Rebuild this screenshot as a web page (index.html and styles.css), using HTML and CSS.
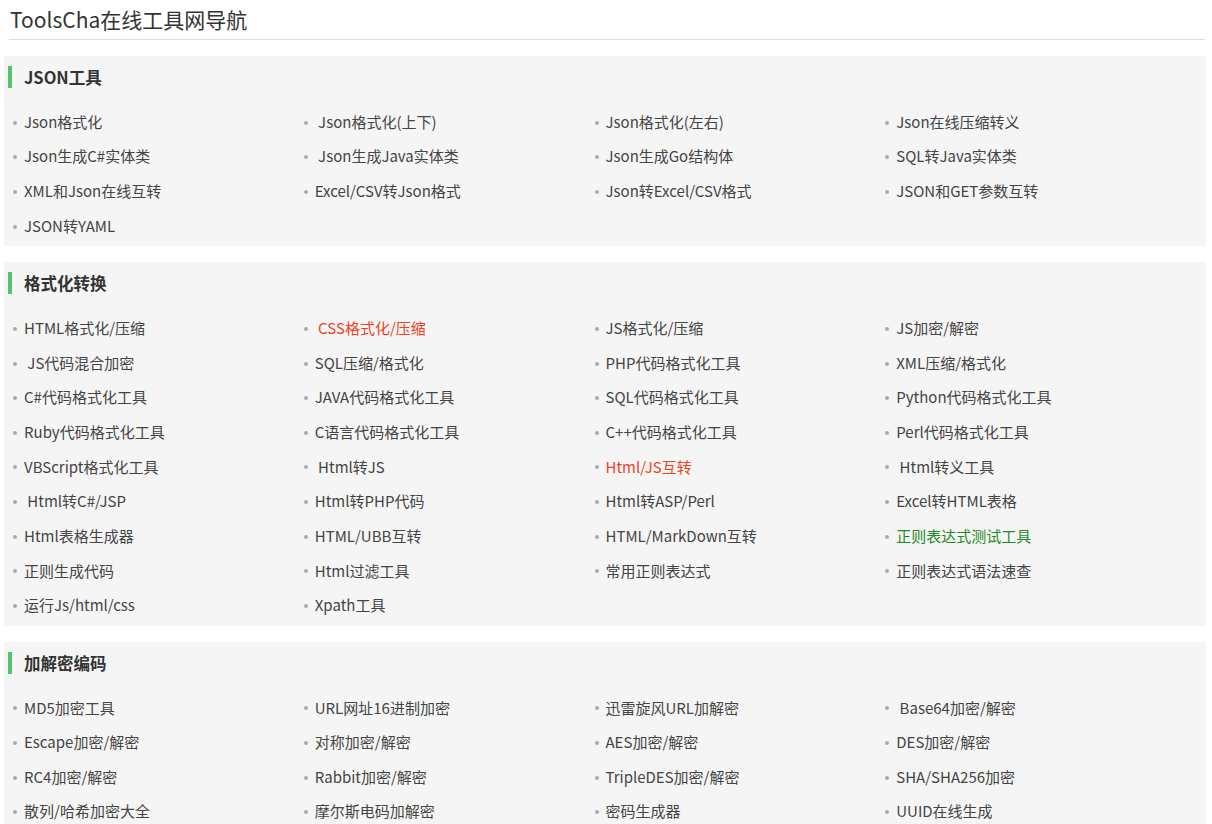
FILE: index.html
```html
<!DOCTYPE html>
<html lang="zh-CN">
<head>
<meta charset="utf-8">
<title>ToolsCha在线工具网导航</title>
<link rel="stylesheet" href="styles.css">
</head>
<body>
<div class="page">
  <header class="top"><h1 class="title">ToolsCha在线工具网导航</h1></header>

  <section class="group">
    <h2 class="group-title">JSON工具</h2>
    <ul class="links">
      <li><a>Json格式化</a></li>
      <li><a> Json格式化(上下)</a></li>
      <li><a>Json格式化(左右)</a></li>
      <li><a>Json在线压缩转义</a></li>
      <li><a>Json生成C#实体类</a></li>
      <li><a> Json生成Java实体类</a></li>
      <li><a>Json生成Go结构体</a></li>
      <li><a>SQL转Java实体类</a></li>
      <li><a>XML和Json在线互转</a></li>
      <li><a>Excel/CSV转Json格式</a></li>
      <li><a>Json转Excel/CSV格式</a></li>
      <li><a>JSON和GET参数互转</a></li>
      <li><a>JSON转YAML</a></li>
    </ul>
  </section>

  <section class="group">
    <h2 class="group-title">格式化转换</h2>
    <ul class="links">
      <li><a>HTML格式化/压缩</a></li>
      <li><a class="hot"> CSS格式化/压缩</a></li>
      <li><a>JS格式化/压缩</a></li>
      <li><a>JS加密/解密</a></li>
      <li><a> JS代码混合加密</a></li>
      <li><a>SQL压缩/格式化</a></li>
      <li><a>PHP代码格式化工具</a></li>
      <li><a>XML压缩/格式化</a></li>
      <li><a>C#代码格式化工具</a></li>
      <li><a>JAVA代码格式化工具</a></li>
      <li><a>SQL代码格式化工具</a></li>
      <li><a>Python代码格式化工具</a></li>
      <li><a>Ruby代码格式化工具</a></li>
      <li><a>C语言代码格式化工具</a></li>
      <li><a>C++代码格式化工具</a></li>
      <li><a>Perl代码格式化工具</a></li>
      <li><a>VBScript格式化工具</a></li>
      <li><a> Html转JS</a></li>
      <li><a class="hot">Html/JS互转</a></li>
      <li><a> Html转义工具</a></li>
      <li><a> Html转C#/JSP</a></li>
      <li><a>Html转PHP代码</a></li>
      <li><a>Html转ASP/Perl</a></li>
      <li><a>Excel转HTML表格</a></li>
      <li><a>Html表格生成器</a></li>
      <li><a>HTML/UBB互转</a></li>
      <li><a>HTML/MarkDown互转</a></li>
      <li><a class="new">正则表达式测试工具</a></li>
      <li><a>正则生成代码</a></li>
      <li><a>Html过滤工具</a></li>
      <li><a>常用正则表达式</a></li>
      <li><a>正则表达式语法速查</a></li>
      <li><a>运行Js/html/css</a></li>
      <li><a>Xpath工具</a></li>
    </ul>
  </section>

  <section class="group">
    <h2 class="group-title">加解密编码</h2>
    <ul class="links">
      <li><a>MD5加密工具</a></li>
      <li><a>URL网址16进制加密</a></li>
      <li><a>迅雷旋风URL加解密</a></li>
      <li><a> Base64加密/解密</a></li>
      <li><a>Escape加密/解密</a></li>
      <li><a>对称加密/解密</a></li>
      <li><a>AES加密/解密</a></li>
      <li><a>DES加密/解密</a></li>
      <li><a>RC4加密/解密</a></li>
      <li><a>Rabbit加密/解密</a></li>
      <li><a>TripleDES加密/解密</a></li>
      <li><a>SHA/SHA256加密</a></li>
      <li><a>散列/哈希加密大全</a></li>
      <li><a>摩尔斯电码加解密</a></li>
      <li><a>密码生成器</a></li>
      <li><a>UUID在线生成</a></li>
    </ul>
  </section>
</div>
</body>
</html>
```

FILE: styles.css
```css
html, body {
  margin: 0;
  padding: 0;
  background: #fff;
}
body {
  font-family: "Noto Sans CJK SC", "Noto Sans", sans-serif;
  color: #444;
}
.page {
  padding: 0 6px 0 4px;
}
.top {
  margin: 0 1px 16px 5px;
  border-bottom: 1px solid #dddddd;
}
.title {
  margin: 0;
  padding-left: 1px;
  font-size: 21px;
  font-weight: normal;
  line-height: 39px;
  height: 39px;
  color: #333;
}
.group {
  background: #f5f5f5;
  padding: 10px 0 3px 0;
  margin-bottom: 16px;
}
.group-title {
  margin: 0 0 16.67px 4px;
  border-left: 4px solid #52c46b;
  padding-left: 12px;
  font-size: 16.5px;
  font-weight: bold;
  line-height: 22px;
  height: 22px;
  color: #333;
}
.links {
  list-style: none;
  margin: 0;
  padding: 0 30px 0 9px;
  display: grid;
  grid-template-columns: repeat(4, 1fr);
}
.links li {
  height: 34.67px;
  line-height: 34.67px;
  font-size: 15px;
  white-space: pre;
}
.links li::before {
  content: "";
  display: inline-block;
  width: 4px;
  height: 4px;
  border-radius: 50%;
  background: #aaa;
  margin: 0 7px 0 0;
  vertical-align: middle;
  position: relative;
  top: -1px;
}
.links a {
  color: #444;
  text-decoration: none;
}
.links a.hot {
  color: #ef421c;
}
.links a.new {
  color: #1f8a1f;
}
```
